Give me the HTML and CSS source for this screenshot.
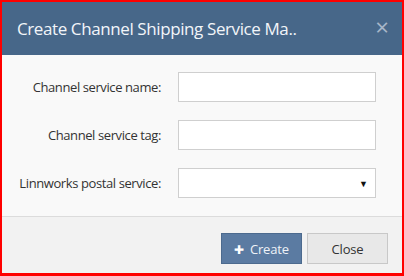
FILE: index.html
```html
<!DOCTYPE html>
<html lang="en">
<head>
    <meta charset="UTF-8">
    <title>Create Channel Shipping Service Mapping</title>
    <link rel="stylesheet" href="styles.css">
</head>
<body>
    <div class="dialog">
        <!-- Header -->
        <div class="dialog-header">
            <span class="dialog-title">Create Channel Shipping Service Ma..</span>
            <span class="dialog-close">&times;</span>
        </div>

        <!-- Form -->
        <div class="dialog-body">
            <label for="serviceName">Channel service name:</label>
            <input type="text" id="serviceName">

            <label for="serviceTag">Channel service tag:</label>
            <input type="text" id="serviceTag">

            <label for="postalService">Linnworks postal service:</label>
            <div class="select-box" id="postalService">
                <span class="select-arrow">&#9660;</span>
            </div>
        </div>

        <!-- Footer -->
        <div class="dialog-footer">
            <button class="btn btn-primary"><span class="plus">&#10010;</span>Create</button>
            <button class="btn btn-default">Close</button>
        </div>
    </div>
</body>
</html>
```

FILE: styles.css
```css
/* Reset */
* {
    margin: 0;
    padding: 0;
    box-sizing: border-box;
}

body {
    font-family: 'Open Sans', 'Liberation Sans', sans-serif;
    background-color: #ff0000;
    width: 404px;
    height: 276px;
    padding: 2px 2px 3px 2px;
}

/* Dialog */
.dialog {
    height: 271px;
    display: flex;
    flex-direction: column;
    background-color: #f9f9f9;
}

.dialog-header {
    height: 53px;
    background-color: #476789;
    display: flex;
    align-items: center;
    justify-content: space-between;
    padding: 0 13px 0 15px;
}

.dialog-title {
    color: #f2f5f9;
    font-size: 17px;
    letter-spacing: -0.4px;
    white-space: nowrap;
    margin-top: -1px;
}

.dialog-close {
    color: #a7b6c8;
    font-size: 24px;
    line-height: 1;
    margin-top: -3px;
}

/* Form */
.dialog-body {
    flex: 1;
    display: grid;
    grid-template-columns: 144px 198px;
    grid-auto-rows: 30px;
    column-gap: 17px;
    row-gap: 18px;
    padding: 17px 26px 0 15px;
}

label {
    font-size: 13px;
    letter-spacing: -0.4px;
    color: #333;
    text-align: right;
    white-space: nowrap;
    align-self: center;
}

input, .select-box {
    height: 30px;
    border: 1px solid #cfcfcf;
    background-color: #fff;
}

.select-box {
    display: flex;
    align-items: center;
    justify-content: flex-end;
    padding-right: 7px;
}

.select-arrow {
    font-size: 9px;
    color: #111;
}

/* Footer */
.dialog-footer {
    height: 57px;
    border-top: 1px solid #dcdcdc;
    background-color: #f2f2f2;
    display: flex;
    justify-content: flex-end;
    gap: 5px;
    padding: 16px 14px 0 0;
}

.btn {
    width: 81px;
    height: 31px;
    font-family: 'Open Sans', 'Liberation Sans', sans-serif;
    font-size: 13px;
    letter-spacing: -0.2px;
    border: 1px solid;
    cursor: pointer;
}

.btn-primary {
    background-color: #5b7ba2;
    border-color: #4c6a8e;
    color: #eef2f7;
}

.plus {
    font-size: 12px;
    color: #fff;
    margin-right: 6px;
}

.btn-default {
    background-color: #e8e8e8;
    border-color: #c8c8c8;
    color: #333;
}
```
